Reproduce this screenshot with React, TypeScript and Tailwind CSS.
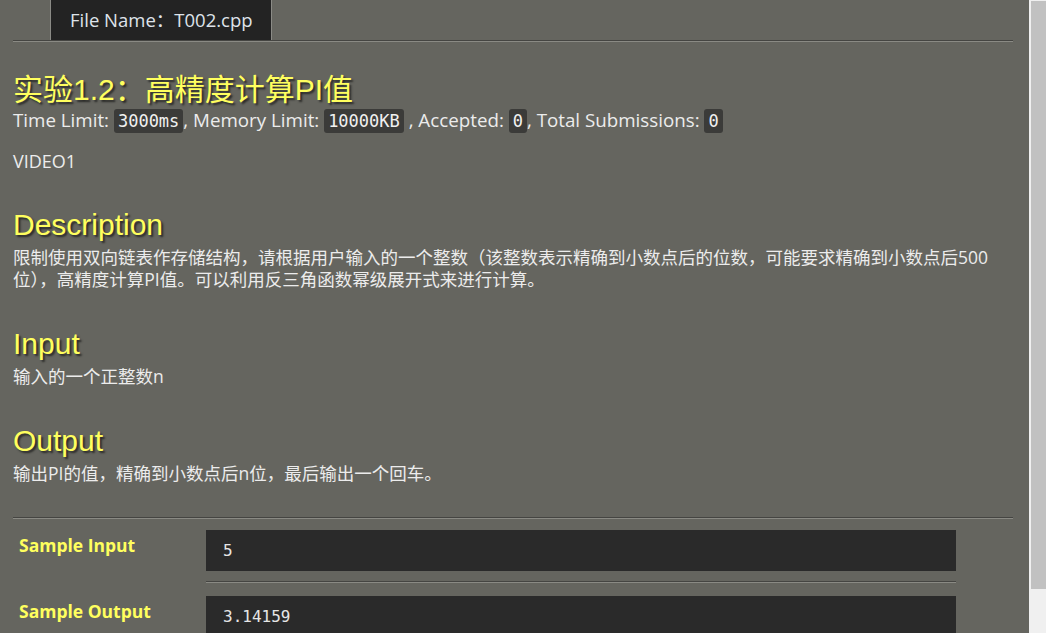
import React from "react";

const body = "font-['Open_Sans','Noto_Sans_CJK_SC',sans-serif]";
const heading =
  "font-['Liberation_Sans','Noto_Sans_CJK_SC',sans-serif] text-[30px] leading-[34px] text-[#ffff5e] [text-shadow:2px_2px_2px_#2a2a28]";
const mono = "font-['DejaVu_Sans_Mono',monospace]";

const Chip = ({ children }: { children: React.ReactNode }) => (
  <code className={`${mono} text-[17px] bg-[#3b3b39] rounded-[3px] px-[4px] py-[2px] text-[#f0f0f0]`}>
    {children}
  </code>
);

const Rule = ({ className = "" }: { className?: string }) => (
  <div className={`border-t border-t-[#454542] border-b border-b-[#8a8a84] h-[2px] ${className}`} />
);

const Section = ({ title, children, className = "" }: { title: string; children: React.ReactNode; className?: string }) => (
  <div className={className}>
    <h2 className={`${heading} mb-[4px]`}>{title}</h2>
    <p className="text-[17.5px] leading-[22px] text-[#ececec]">{children}</p>
  </div>
);

export default function App() {
  return (
    <div className={`flex h-[633px] overflow-hidden bg-[#65655f] ${body}`}>
      <div className="flex-1 pl-[13px] pr-[16px]">
        <div className="ml-[37px] w-[222px] h-[40px] bg-[#232323] border-x border-[#8b8b86] flex items-center pl-[19px] text-[18.5px] text-[#dfe3ea]">
          File Name：T002.cpp
        </div>
        <Rule />

        <h1 className={`${heading} mt-[31px]`}>实验1.2：高精度计算PI值</h1>
        <div className="text-[18.75px] leading-[24px] text-[#ececec] mt-[1px]">
          Time Limit: <Chip>3000ms</Chip>, Memory Limit: <Chip>10000KB</Chip> , Accepted: <Chip>0</Chip>, Total Submissions: <Chip>0</Chip>
        </div>
        <div className="text-[18px] text-[#ececec] mt-[15px]">VIDEO1</div>

        <Section title="Description" className="mt-[33px]">
          限制使用双向链表作存储结构，请根据用户输入的一个整数（该整数表示精确到小数点后的位数，可能要求精确到小数点后500位），高精度计算PI值。可以利用反三角函数幂级展开式来进行计算。
        </Section>
        <Section title="Input" className="mt-[37px]">
          输入的一个正整数n
        </Section>
        <Section title="Output" className="mt-[37px]">
          输出PI的值，精确到小数点后n位，最后输出一个回车。
        </Section>

        <Rule className="mt-[33px]" />

        <div className="mt-[11px] flex">
          <div className="w-[193px] pl-[6px] pt-[2px] font-bold text-[17.5px] text-[#ffff5e]">Sample Input</div>
          <pre className={`${mono} w-[750px] h-[41px] bg-[#2a2a2a] text-[#e6e6e6] text-[16px] pl-[17px] flex items-center`}>5</pre>
        </div>
        <Rule className="ml-[193px] w-[750px] mt-[10px]" />
        <div className="mt-[13px] flex">
          <div className="w-[193px] pl-[6px] pt-[2px] font-bold text-[17.5px] text-[#ffff5e]">Sample Output</div>
          <pre className={`${mono} w-[750px] h-[41px] bg-[#2a2a2a] text-[#e6e6e6] text-[16px] pl-[17px] flex items-center`}>3.14159</pre>
        </div>
      </div>

      <div className="w-[17px] bg-[#f0f0f0] pl-[2px] pt-px">
        <div className="h-[588px] bg-[#c1c1c1]" />
      </div>
    </div>
  );
}
